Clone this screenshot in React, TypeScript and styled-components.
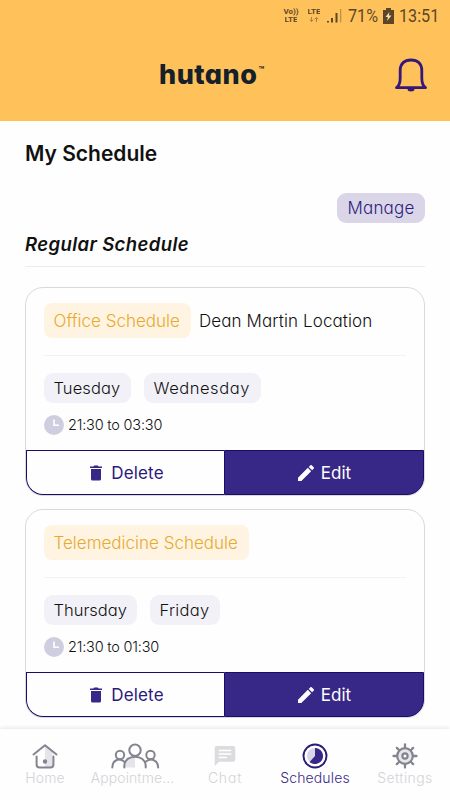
import React from "react";
import styled, { createGlobalStyle } from "styled-components";

const indigo = "#372786";
const indigoDark = "#1d0c66";

const GlobalStyle = createGlobalStyle`
  * { box-sizing: border-box; }
  body {
    margin: 0;
    background: #fefefe;
    color: #111;
    font-family: Inter, "Liberation Sans", sans-serif;
    font-feature-settings: "cv11";
  }
`;

const Screen = styled.div`
  width: 450px;
  height: 800px;
  overflow: hidden;
  display: flex;
  flex-direction: column;
`;

const Header = styled.header`
  height: 121px;
  flex: none;
  background: #ffc25a;
`;

const StatusBar = styled.div`
  height: 31px;
  padding-right: 10px;
  display: flex;
  justify-content: flex-end;
  align-items: center;
  color: #5b4728;
  font-family: Roboto, sans-serif;
`;

const Network = styled.div<{ $gap: number }>`
  width: 18px;
  margin-right: ${(p) => p.$gap}px;
  display: flex;
  flex-direction: column;
  align-items: center;
  font-size: 8px;
  line-height: 8px;
  font-weight: 700;
  white-space: nowrap;

  span {
    height: 8px;
    overflow: hidden;
  }
`;

const StatusText = styled.span<{ $width: number }>`
  width: ${(p) => p.$width}px;
  font-size: 19px;
  line-height: 31px;
  white-space: nowrap;

  span {
    display: inline-block;
    transform: scaleX(0.85);
    transform-origin: left center;
  }
`;

const StatusIcon = styled.svg<{ $gap: number }>`
  flex: none;
  margin-right: ${(p) => p.$gap}px;
`;

const BrandBar = styled.div`
  height: 90px;
  padding: 0 22px 0 159px;
  display: flex;
  justify-content: space-between;
  align-items: flex-start;
`;

const Logo = styled.div`
  display: flex;
  align-items: flex-start;
  padding-top: 27px;
  color: #14202a;
  font-size: 27px;
  line-height: 34px;
  font-weight: 800;
  letter-spacing: 0.5px;

  sup {
    margin-left: 1px;
    font-size: 9px;
    line-height: 24px;
    letter-spacing: 0;
    font-weight: 700;
  }
`;

const Bell = styled.svg`
  margin-top: 25px;
`;

const Content = styled.main`
  flex: 1;
  min-height: 0;
  padding: 0 25px;
  overflow: hidden;
`;

const Title = styled.h1`
  margin: 20px 0 0;
  font-size: 21px;
  line-height: 26px;
  font-weight: 600;
`;

const ManageRow = styled.div`
  margin-top: 26px;
  display: flex;
  justify-content: flex-end;
`;

const ManageButton = styled.button`
  width: 88px;
  height: 30px;
  padding: 0;
  border: 0;
  border-radius: 9px;
  background: #dad6e8;
  color: #2e1d80;
  font: 300 17px/30px Inter, sans-serif;
  font-feature-settings: "cv11";
  letter-spacing: 0.2px;
`;

const SectionTitle = styled.h2`
  margin: 10px 0 0;
  height: 34px;
  border-bottom: 1px solid #ececec;
  font-size: 18.5px;
  line-height: 23px;
  font-weight: 600;
  font-style: italic;
  letter-spacing: 0.4px;
`;

const CardList = styled.div`
  margin-top: 20px;
  display: flex;
  flex-direction: column;
  gap: 13px;
`;

const Card = styled.article`
  height: 209px;
  flex: none;
  border: 1px solid #d9d9dd;
  border-radius: 18px;
  display: flex;
  flex-direction: column;
`;

const CardBody = styled.div`
  flex: 1;
  min-height: 0;
  padding: 15px 18px 0;
`;

const TagRow = styled.div`
  height: 53px;
  border-bottom: 1px solid #f2f2f4;
  display: flex;
  align-items: flex-start;
  gap: 8px;
`;

const Tag = styled.span<{ $width: number }>`
  width: ${(p) => p.$width}px;
  height: 35px;
  padding-left: 9.5px;
  border-radius: 8px;
  background: #fef4e1;
  color: #e9a930;
  font-size: 17px;
  line-height: 36px;
  font-weight: 350;
  white-space: nowrap;
`;

const Location = styled.span`
  font-size: 17px;
  line-height: 36px;
  font-weight: 350;
  letter-spacing: 0.1px;
`;

const Days = styled.div`
  margin-top: 17px;
  display: flex;
  gap: 13px;
`;

const Day = styled.span<{ $width: number; $spacing: number }>`
  width: ${(p) => p.$width}px;
  height: 30px;
  padding-left: 9.5px;
  border-radius: 9px;
  background: #f2f1f8;
  font-size: 16.5px;
  line-height: 30px;
  font-weight: 330;
  letter-spacing: ${(p) => p.$spacing}px;
  white-space: nowrap;
`;

const Time = styled.div`
  margin-top: 12px;
  display: flex;
  align-items: center;
  gap: 4px;
  font-size: 14.5px;
  line-height: 20px;
  font-weight: 330;
  letter-spacing: -0.2px;
`;

const Actions = styled.div`
  height: 45px;
  flex: none;
  display: grid;
  grid-template-columns: 198px 200px;
`;

const Action = styled.button<{ $filled?: boolean }>`
  padding: 0 0 0 ${(p) => (p.$filled ? 1 : 3)}px;
  border: 1px solid ${indigoDark};
  border-right-width: ${(p) => (p.$filled ? 1 : 0)}px;
  border-radius: ${(p) => (p.$filled ? "0 0 17px 0" : "0 0 0 17px")};
  background: ${(p) => (p.$filled ? indigo : "#fefefe")};
  color: ${(p) => (p.$filled ? "#fff" : "#2a197b")};
  display: flex;
  align-items: center;
  justify-content: center;
  gap: ${(p) => (p.$filled ? 7 : 9)}px;
  font: 400 17px/20px Inter, sans-serif;
  font-feature-settings: "cv11";
  letter-spacing: ${(p) => (p.$filled ? 0 : 0.15)}px;
`;

const TabBar = styled.nav`
  height: 71px;
  flex: none;
  display: grid;
  grid-template-columns: repeat(5, 1fr);
  background: #fefefe;
  box-shadow: 0 -1px 4px rgba(0, 0, 0, 0.1);
`;

const Tab = styled.a<{ $active?: boolean; $spacing?: number }>`
  min-width: 0;
  padding-top: 14px;
  display: flex;
  flex-direction: column;
  align-items: center;
  color: ${(p) => (p.$active ? "#3b2a86" : "#d3d3d7")};
  font-size: 14px;
  line-height: 17px;
  font-weight: ${(p) => (p.$active ? 350 : 300)};
  letter-spacing: ${(p) => p.$spacing ?? 0.15}px;
  white-space: nowrap;
`;

const TabLabel = styled.span<{ $inset?: number }>`
  padding-right: ${(p) => p.$inset ?? 0}px;
`;

const BellIcon = () => (
  <Bell width="34" height="36" viewBox="0 0 34 36" fill="none" stroke="#351879" strokeWidth="2.8">
    <path d="M2.500 31.700 C5.500 29.500 6.200 27 6.200 22 V14.500 C6.200 7.500 10.500 4 17 4 C23.500 4 27.800 7.500 27.800 14.500 V22 C27.800 27 28.500 29.500 31.500 31.700 Z" strokeLinejoin="round" />
    <path d="M13.500 33 a3.500 2.500 0 0 0 7 0 Z" fill="#351879" stroke="none" />
  </Bell>
);

const ClockIcon = () => (
  <svg width="20" height="20" viewBox="0 0 20 20">
    <circle cx="10" cy="10" r="10" fill="#cfcee0" />
    <path d="M10 4.500 V10.200 H15" fill="none" stroke="#fff" strokeWidth="1.600" />
  </svg>
);

const TrashIcon = () => (
  <svg width="12" height="16" viewBox="1 0 12 16" fill={indigo}>
    <path d="M2 4 H12 V14 Q12 15.500 10.500 15.500 H3.500 Q2 15.500 2 14 Z" />
    <path d="M1 1.400 H4.300 L5.200 .500 H8.800 L9.700 1.400 H13 V3 H1 Z" />
  </svg>
);

const PencilIcon = () => (
  <svg width="16" height="16" viewBox="3 3 18 18" fill="#fff">
    <path d="M3 17.250V21h3.750L17.810 9.940l-3.750-3.750L3 17.250z M20.710 7.040a1 1 0 0 0 0-1.410l-2.340-2.340a1 1 0 0 0-1.410 0l-1.830 1.830 3.750 3.750 1.830-1.830z" />
  </svg>
);

const HomeIcon = () => (
  <svg width="26" height="26" viewBox="0 0 26 26" fill="none" stroke="#83848f" strokeWidth="2" strokeLinecap="round" strokeLinejoin="round">
    <path d="M13 3 L20.500 9 V24 H13 Z" fill="#e4e4ea" stroke="none" />
    <path d="M1.500 11.500 L13 2.300 L24.500 11.500" />
    <path d="M4.600 13.500 V21.500 Q4.600 24.500 7.600 24.500 H18.400 Q21.400 24.500 21.400 21.500 V13.500" />
    <circle cx="13" cy="18.500" r="1.200" fill="#83848f" />
  </svg>
);

const PeopleIcon = () => (
  <svg width="50" height="26" viewBox="0 0 50 26" fill="none" stroke="#83848f" strokeWidth="2" strokeLinecap="round">
    <path d="M25 14 H17 Q14 17 14 24.500 H25 Z" fill="#e4e4ea" stroke="none" />
    <circle cx="25" cy="7.200" r="5.700" />
    <path d="M14.300 24.500 V23 C14.300 10.500 35.700 10.500 35.700 23 V24.500" />
    <circle cx="10" cy="12" r="4.200" />
    <path d="M2.300 24.500 C2.300 17 9 14.500 14.300 18.700" />
    <circle cx="40.500" cy="12" r="4.200" />
    <path d="M48.200 24.500 C48.200 17 41 14.500 35.700 18.700" />
  </svg>
);

const ChatIcon = () => (
  <svg width="26" height="26" viewBox="0 0 26 26">
    <path d="M4.500 3 H21.500 Q23.300 3 23.300 4.800 V17 Q23.300 18.800 21.500 18.800 H7 L2.700 23 V4.800 Q2.700 3 4.500 3 Z" fill="#dcdce0" />
    <path d="M6.700 7.500 H19.300 M6.700 11 H19.300 M6.700 14.500 H15" stroke="#fff" strokeWidth="1.500" />
  </svg>
);

const SchedulesIcon = () => (
  <svg width="26" height="26" viewBox="0 0 26 26">
    <circle cx="13" cy="13" r="11.500" fill="none" stroke="#2c1979" strokeWidth="1.900" />
    <circle cx="13" cy="13" r="8" fill="#d9d5ea" />
    <path d="M13 5 A8 8 0 1 1 7.600 18.900 L13 13 Z" fill={indigo} />
  </svg>
);

const SettingsIcon = () => (
  <svg width="26" height="26" viewBox="0 0 26 26" fill="none" stroke="#83848f">
    {[0, 45, 90, 135, 180, 225, 270, 315].map((angle) => (
      <path key={angle} d="M13 4.500 V1.500" transform={`rotate(${angle} 13 13)`} strokeWidth="2.300" strokeLinecap="round" />
    ))}
    <circle cx="13" cy="13" r="7.800" fill="#e6e6eb" strokeWidth="2.200" />
    <circle cx="13" cy="13" r="2.600" fill="#fff" strokeWidth="2.200" />
  </svg>
);

interface Schedule {
  tag: string;
  tagWidth: number;
  location?: string;
  days: { name: string; width: number; spacing: number }[];
  time: string;
}

const schedules: Schedule[] = [
  {
    tag: "Office Schedule",
    tagWidth: 147,
    location: "Dean Martin Location",
    days: [
      { name: "Tuesday", width: 87, spacing: 0.1 },
      { name: "Wednesday", width: 117, spacing: 0.55 },
    ],
    time: "21:30 to 03:30",
  },
  {
    tag: "Telemedicine Schedule",
    tagWidth: 205,
    days: [
      { name: "Thursday", width: 93, spacing: 0 },
      { name: "Friday", width: 70, spacing: 0.3 },
    ],
    time: "21:30 to 01:30",
  },
];

export default function App() {
  return (
    <Screen>
      <GlobalStyle />
      <Header>
        <StatusBar>
          <Network $gap={5}><span>Vo))</span><span>LTE</span></Network>
          <Network $gap={4}>
            <span>LTE</span>
            <svg width="10" height="7" viewBox="0 0 10 7" fill="none" stroke="#a98346" strokeWidth="1">
              <path d="M2.500 1 V5.500 M.700 3.800 L2.500 5.500 L4.300 3.800 M7.500 6 V1.500 M5.700 3.200 L7.500 1.500 L9.300 3.200" />
            </svg>
          </Network>
          <StatusIcon $gap={6} width="15" height="15" viewBox="0 0 15 15" fill="#5b4728">
            <path d="M0 13h2v1.500H0z M4 10h2v4.500H4z M8.500 5h2v9.500h-2z" />
            <path d="M13 1h1.300v13.500H13z" fill="#b99150" />
          </StatusIcon>
          <StatusText $width={35}><span>71%</span></StatusText>
          <StatusIcon $gap={5} width="11" height="16" viewBox="0 0 11 16">
            <path d="M3 0h5v2h3v14H0V2h3z" fill="#5b4728" />
            <path d="M6.500 4 L2.500 9 H5 L4 13 L8.500 7.500 H5.800 Z" fill="#ffe0a8" />
          </StatusIcon>
          <StatusText $width={41}><span>13:51</span></StatusText>
        </StatusBar>
        <BrandBar>
          <Logo>hutano<sup>™</sup></Logo>
          <BellIcon />
        </BrandBar>
      </Header>
      <Content>
        <Title>My Schedule</Title>
        <ManageRow><ManageButton>Manage</ManageButton></ManageRow>
        <SectionTitle>Regular Schedule</SectionTitle>
        <CardList>
          {schedules.map((s) => (
            <Card key={s.tag}>
              <CardBody>
                <TagRow>
                  <Tag $width={s.tagWidth}>{s.tag}</Tag>
                  {s.location && <Location>{s.location}</Location>}
                </TagRow>
                <Days>
                  {s.days.map((d) => (
                    <Day key={d.name} $width={d.width} $spacing={d.spacing}>{d.name}</Day>
                  ))}
                </Days>
                <Time><ClockIcon />{s.time}</Time>
              </CardBody>
              <Actions>
                <Action><TrashIcon />Delete</Action>
                <Action $filled><PencilIcon />Edit</Action>
              </Actions>
            </Card>
          ))}
        </CardList>
      </Content>
      <TabBar>
        <Tab><HomeIcon /><TabLabel>Home</TabLabel></Tab>
        <Tab $spacing={0.1}><PeopleIcon /><TabLabel $inset={5}>Appointme...</TabLabel></Tab>
        <Tab $spacing={0.8}><ChatIcon /><TabLabel>Chat</TabLabel></Tab>
        <Tab $active><SchedulesIcon /><TabLabel>Schedules</TabLabel></Tab>
        <Tab $spacing={0.4}><SettingsIcon /><TabLabel>Settings</TabLabel></Tab>
      </TabBar>
    </Screen>
  );
}
